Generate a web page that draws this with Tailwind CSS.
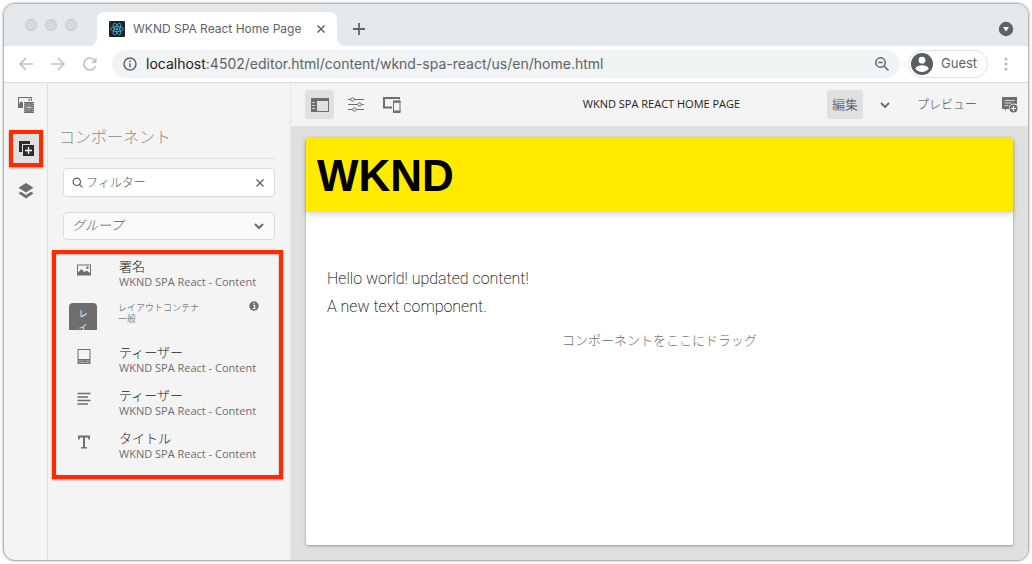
<!DOCTYPE html>
<html lang="ja">
<head>
<meta charset="utf-8">
<title>WKND SPA React Home Page</title>
<script src="https://cdn.jsdelivr.net/npm/@tailwindcss/browser@4"></script>
</head>
<body class="h-screen bg-white p-[3px] font-['Open_Sans','Noto_Sans_CJK_JP',sans-serif] text-xs text-[#6e6e6e]">
<div class="flex h-full flex-col overflow-hidden rounded-xl border border-[#b4b4b4] bg-[#f4f4f4] shadow-[0_0_3px_rgba(0,0,0,0.3)]">

  <!-- Tab strip -->
  <header class="flex h-[42px] shrink-0 items-end bg-[#e5e9ec] pr-[14px] pl-[21px] font-[Inter,sans-serif]">
    <div class="flex h-full items-center gap-2 pr-5">
      <span class="size-3 rounded-full border border-[#c6c8ca] bg-[#d6d8da]"></span>
      <span class="size-3 rounded-full border border-[#c6c8ca] bg-[#d6d8da]"></span>
      <span class="size-3 rounded-full border border-[#c6c8ca] bg-[#d6d8da]"></span>
    </div>
    <div class="relative flex h-[34px] w-60 items-center rounded-t-lg bg-white pr-2 pl-3">
      <svg class="absolute bottom-0 -left-2 size-2" viewBox="0 0 8 8" fill="#fff"><path d="M8 0v8H0A8 8 0 0 0 8 0z"/></svg>
      <svg class="absolute -right-2 bottom-0 size-2" viewBox="0 0 8 8" fill="#fff"><path d="M0 0v8h8A8 8 0 0 1 0 0z"/></svg>
      <svg class="size-4 shrink-0" viewBox="0 0 16 16" fill="none" stroke="#3fb4cf" stroke-width="0.8"><rect width="16" height="16" rx="1" fill="#20232a" stroke="none"/><ellipse cx="8" cy="8" rx="6.4" ry="2.5"/><ellipse cx="8" cy="8" rx="6.4" ry="2.5" transform="rotate(60 8 8)"/><ellipse cx="8" cy="8" rx="6.4" ry="2.5" transform="rotate(120 8 8)"/><circle cx="8" cy="8" r="1.2" fill="#3fb4cf" stroke="none"/></svg>
      <span class="ml-2 grow whitespace-nowrap text-xs text-[#5f6368]">WKND SPA React Home Page</span>
      <button class="grid size-4 place-items-center" aria-label="Close tab"><svg class="size-2" viewBox="0 0 8 8" stroke="#5f6368" stroke-width="1.5"><path d="M.5.5l7 7M7.5.5l-7 7"/></svg></button>
    </div>
    <button class="mb-[9px] ml-[14px] grid size-4 place-items-center" aria-label="New tab"><svg class="size-3" viewBox="0 0 12 12" stroke="#5f6368" stroke-width="1.8"><path d="M6 0v12M0 6h12"/></svg></button>
    <button class="mb-[9px] ml-auto" aria-label="Search tabs"><svg class="size-4" viewBox="0 0 16 16"><circle cx="8" cy="8" r="7.2" fill="#5f6368"/><path d="M5 6h6l-3 4.5z" fill="#fff"/></svg></button>
  </header>

  <!-- Address bar -->
  <nav class="flex h-[37px] shrink-0 items-center border-b border-[#dcdcdc] bg-white pr-[14px] pl-[14px] font-[Inter,sans-serif]">
    <div class="flex w-[94px] shrink-0 gap-4">
      <button aria-label="Back"><svg class="size-4" viewBox="0 0 16 16" fill="none" stroke="#c0c3c6" stroke-width="1.6"><path d="M15 8H2M8 2L2 8l6 6"/></svg></button>
      <button aria-label="Forward"><svg class="size-4" viewBox="0 0 16 16" fill="none" stroke="#c0c3c6" stroke-width="1.6"><path d="M1 8h13M8 2l6 6-6 6"/></svg></button>
      <button aria-label="Reload"><svg class="size-4" viewBox="0 0 16 16" fill="none" stroke="#c0c3c6" stroke-width="1.7"><path d="M13.6 10A6 6 0 1 1 12.6 4.200L14 6"/><path d="M14.500 1.500v5.500h-5.500z" fill="#c0c3c6" stroke="none"/></svg></button>
    </div>
    <div class="flex h-7 grow items-center rounded-full bg-[#f1f3f4] pr-[10px] pl-[10px]">
      <svg class="size-4 shrink-0" viewBox="0 0 16 16" fill="none" stroke="#5f6368" stroke-width="1.5"><circle cx="8" cy="8" r="6"/><path d="M8 7.200v4M8 4.600v1.500"/></svg>
      <div role="textbox" aria-label="Address" contenteditable="true" class="ml-2 grow text-sm whitespace-nowrap text-[#5f6368]"><span class="text-[#202124]">localhost</span>:4502/editor.html/content/wknd-spa-react/us/en/home.html</div>
      <button aria-label="Zoom"><svg class="size-4" viewBox="0 0 16 16" fill="none" stroke="#5f6368" stroke-width="1.5"><circle cx="6.500" cy="6.500" r="4.700"/><path d="M10 10l4.500 4.500M4.300 6.500h4.400"/></svg></button>
    </div>
    <button class="ml-2 flex h-7 w-20 items-center rounded-full border border-[#dfe1e4] pl-[2px] text-[13px] text-[#5f6368]"><svg class="mr-2 size-[22px]" viewBox="0 0 22 22"><circle cx="11" cy="11" r="11" fill="#5a5e64"/><circle cx="11" cy="7.200" r="3.400" fill="#fff"/><path d="M4.200 15.500c1-2.400 4.300-3.300 6.800-3.300s5.800.9 6.800 3.300c-1.500 2.200-4 3.500-6.800 3.500s-5.300-1.300-6.800-3.500z" fill="#fff"/></svg>Guest</button>
    <button class="ml-[10px]" aria-label="Menu"><svg class="size-4" viewBox="0 0 16 16" fill="#b6b9bc"><circle cx="8" cy="3" r="1.500"/><circle cx="8" cy="8" r="1.500"/><circle cx="8" cy="13" r="1.500"/></svg></button>
  </nav>

  <div class="flex min-h-0 grow">
    <!-- Rail -->
    <nav class="flex w-11 shrink-0 flex-col items-center border-r border-[#e0e0e0] pt-[14px]">
      <button aria-label="Assets"><svg class="size-4" viewBox="0 0 16 16" fill="#6e6e6e"><path d="M0 0h14v4h-1V1H1v6l2-3 2 2v5H0z"/><circle cx="11.300" cy="2.800" r="1"/><path d="M6 5h10v11H6z"/><path d="M8.500 6.500h5v3.300h-5zM8.500 11h5v3.500h-5z" fill="#8a8a8a"/><path d="M8.500 10.400h5" stroke="#eee" stroke-width=".8"/><path d="M6.500 6h1v1h-1zM6.500 8h1v1h-1zM6.500 10h1v1h-1zM6.500 12h1v1h-1zM6.500 14h1v1h-1zM14.500 6h1v1h-1zM14.500 8h1v1h-1zM14.500 10h1v1h-1zM14.500 12h1v1h-1zM14.500 14h1v1h-1z" fill="#ddd"/></svg></button>
      <button class="mt-[17px] grid h-[37px] w-[34px] place-items-center border-4 border-[#ff2a00] bg-[#e0e0e0] shadow-[0_1px_2px_rgba(0,0,0,0.4)]" aria-label="Components"><svg class="size-4" viewBox="0 0 16 16" fill="#2c2c2c"><path d="M1 0h11v3H4v8H1z"/><path d="M5 4h11v11H5z"/><path d="M10.500 6v7M7 9.500h7" stroke="#fff" stroke-width="1.400"/></svg></button>
      <button class="mt-4" aria-label="Content tree"><svg class="size-4" viewBox="0 0 16 16" fill="#6e6e6e"><path d="M8 0l7.500 4.800L8 9.600.5 4.800z"/><path d="M3 8.700l5 3.200 5-3.200 2.500 1.600L8 15.500.5 10.300z"/></svg></button>
    </nav>

    <!-- Component browser -->
    <aside class="w-[243px] shrink-0 border-r border-[#e6e6e6] pt-[42px] pr-[7px] pl-1">
      <div class="pr-2 pl-[11px]">
        <h2 class="-ml-1 border-b border-[#f4f4f4] text-base leading-6 font-light text-[#8e8e8e]">コンポーネント</h2>
        <div class="mt-2 h-px bg-[#e0e0e0]"></div>
        <div class="mt-[9px] flex h-[29px] items-center rounded border border-[#dadada] bg-white px-2">
          <svg class="size-[11px] shrink-0" viewBox="0 0 11 11" fill="none" stroke="#5c5c5c" stroke-width="1.200"><circle cx="4.800" cy="4.800" r="3.700"/><path d="M7.400 7.400l3 3"/></svg>
          <input aria-label="フィルター" placeholder="フィルター" class="ml-[3px] min-w-0 grow bg-transparent text-xs font-light outline-none placeholder:text-[#5a5a5a]">
          <button class="grid size-3 place-items-center" aria-label="Clear"><svg class="size-2" viewBox="0 0 8 8" stroke="#5c5c5c" stroke-width="1.200"><path d="M.5.5l7 7M7.500.5l-7 7"/></svg></button>
        </div>
        <div class="mt-[15px] grid h-7 items-center rounded border border-[#dadada] bg-[#fafafa]">
          <select aria-label="グループ" class="col-start-1 row-start-1 h-full w-full appearance-none bg-transparent pl-2 text-[13px] font-light text-[#5a5a5a] italic"><option>グループ</option></select>
          <svg class="pointer-events-none col-start-1 row-start-1 mr-[10px] h-2 w-[10px] justify-self-end" viewBox="0 0 10 8" fill="none" stroke="#6a6a6a" stroke-width="2"><path d="M1 2l4 4 4-4"/></svg>
        </div>
        <div class="mt-2 h-px bg-[#e6e6e6]"></div>
      </div>
      <ul class="mt-px flex h-[229px] flex-col border-4 border-[#ff2a00] pt-1 pr-5 pl-[13px] shadow-[0_1px_2px_rgba(0,0,0,0.4),inset_0_1px_2px_rgba(0,0,0,0.3)]">
        <li class="flex h-[43px] shrink-0"><svg class="mt-1 mr-[27px] ml-[7px] size-4 shrink-0" viewBox="0 0 16 16" fill="#6e6e6e"><path d="M1 2.500h14v11H1zM2 3.500v7l3.500-3.500 3 3.200 2-1.700 3.500 2.500v-7.500z" fill-rule="evenodd"/><circle cx="11.500" cy="5.700" r="1.200"/></svg><div><div class="text-[13px] leading-4 font-light text-[#222]">署名</div><div class="text-[11px] leading-[15px] whitespace-nowrap">WKND SPA React - Content</div></div></li>
        <li class="flex h-[43px] shrink-0"><div class="mt-[2px] mr-[21px] h-[27px] w-7 shrink-0 overflow-hidden rounded-t-sm bg-[#6e6e6e] pt-1 text-center text-[9px] leading-[14px] text-[#f4f4f4]">レ<br>イ</div><div class="mt-px grow text-[9px] leading-[11px] font-light text-[#4b4b4b]"><div>レイアウトコンテナ</div><div>一般</div></div><svg class="size-[10px] shrink-0" viewBox="0 0 10 10"><circle cx="5" cy="5" r="4.700" fill="#6e6e6e"/><path d="M4 4.300h1.600v3M3.800 7.500h2.600M5 1.700v1.400" stroke="#fff" stroke-width="1.100" fill="none"/></svg></li>
        <li class="flex h-[43px] shrink-0"><svg class="mt-1 mr-[27px] ml-[7px] size-4 shrink-0" viewBox="0 0 16 16" fill="#6e6e6e"><path d="M1.500 1h13v15h-13zM2.500 2v9h11V2z" fill-rule="evenodd"/><path d="M2.500 12.800h5.500M9.500 12.800h4M2.500 14.500h11" stroke="#d8d8d8" stroke-width=".6"/></svg><div><div class="text-[13px] leading-4 font-light text-[#222]">ティーザー</div><div class="text-[11px] leading-[15px] whitespace-nowrap">WKND SPA React - Content</div></div></li>
        <li class="flex h-[43px] shrink-0"><svg class="mt-1 mr-[27px] ml-[7px] size-4 shrink-0" viewBox="0 0 16 16" stroke="#6e6e6e" stroke-width="1.300"><path d="M1.500 2.500h13M1.500 6h10.500M1.500 9.500h13M1.500 13h10.500"/></svg><div><div class="text-[13px] leading-4 font-light text-[#222]">ティーザー</div><div class="text-[11px] leading-[15px] whitespace-nowrap">WKND SPA React - Content</div></div></li>
        <li class="flex h-[43px] shrink-0"><svg class="mt-1 mr-[27px] ml-[7px] size-4 shrink-0" viewBox="0 0 16 16" fill="#6e6e6e"><path d="M2 1.500h12v4h-1.500l-.5-2H9v9.500l2 .3V14.500H5v-1.200l2-.3V3.500H4l-.5 2H2z"/></svg><div><div class="text-[13px] leading-4 font-light text-[#222]">タイトル</div><div class="text-[11px] leading-[15px] whitespace-nowrap">WKND SPA React - Content</div></div></li>
      </ul>
    </aside>

    <main class="flex min-w-0 grow flex-col bg-[#e0e0e0]">
      <!-- Editor toolbar -->
      <div class="grid h-[43px] shrink-0 grid-cols-[1fr_auto_1fr] items-center bg-[#f4f4f4] pr-[10px] pl-[14px]">
        <div class="flex items-center">
          <button class="grid size-[29px] place-items-center rounded-[3px] bg-[#e0e0e0]" aria-label="Toggle side panel"><svg class="h-[14px] w-[18px]" viewBox="0 0 18 14" fill="#6e6e6e"><path d="M0 0h18v14H0zM6 3V13h11V3z" fill-rule="evenodd"/><path d="M1 4.500h3M1 7.500h3M1 10.500h3" stroke="#ccc"/></svg></button>
          <button class="ml-[14px]" aria-label="Page information"><svg class="size-4" viewBox="0 0 16 16" fill="none" stroke="#6e6e6e"><path d="M0 2.500h3M6 2.500H16M0 7.500h9.500M13.500 7.500H16M0 12.500h4.500M8.500 12.500H16"/><circle cx="4.500" cy="2.500" r="1.700"/><circle cx="11.500" cy="7.500" r="1.700"/><circle cx="6.500" cy="12.500" r="1.700"/></svg></button>
          <button class="ml-[19px]" aria-label="Emulator"><svg class="h-4 w-[18px]" viewBox="0 0 18 16" fill="none" stroke="#6e6e6e"><path d="M0 1h17M1 1v10M0 10.500h9" stroke-width="2"/><path d="M16.500 1v1.500"/><path d="M10.500 4h6.500v11.500h-6.500z" fill="#f4f4f4"/><path d="M10 4.700h7.500M10 14.500h7.500" stroke-width="2"/></svg></button>
        </div>
        <h1 class="text-[11px] whitespace-nowrap text-[#222]">WKND SPA REACT HOME PAGE</h1>
        <div class="flex items-center justify-end">
          <button class="h-[29px] w-9 rounded-[3px] bg-[#e0e0e0] text-[13px] font-light text-[#4b4b4b]">編集</button>
          <button class="ml-4 grid size-3 place-items-center" aria-label="Choose mode"><svg class="h-2 w-[10px]" viewBox="0 0 10 8" fill="none" stroke="#6a6a6a" stroke-width="1.800"><path d="M1 2l4 4 4-4"/></svg></button>
          <button class="ml-[26px] text-xs font-light text-[#4b4b4b]">プレビュー</button>
          <button class="ml-[25px]" aria-label="Annotate"><svg class="size-4" viewBox="0 0 16 16" fill="#6e6e6e"><path d="M0 0h15v7.500A5 5 0 0 0 7 12H4.500L3 14v-2H0z"/><path d="M2.500 3.500h10M2.500 6h7M2.500 8.500h4" stroke="#d5d5d5"/><circle cx="11.500" cy="11.500" r="4"/><path d="M11.500 9v5M9 11.500h5" stroke="#fff" stroke-width="1.200"/></svg></button>
        </div>
      </div>
      <!-- Page preview -->
      <div class="mx-[15px] mt-3 mb-[15px] flex grow flex-col rounded-xs bg-white shadow-[0_1px_3px_rgba(0,0,0,0.35)]">
        <div class="flex h-[74px] shrink-0 items-center rounded-t-xs bg-[#ffea00] pt-px pl-[11px] shadow-[0_2px_6px_rgba(0,0,0,0.18)]"><span class="font-['Liberation_Sans',sans-serif] text-[44px] leading-none font-bold text-black">WKND</span></div>
        <div class="mt-[53px] px-[21px] font-[Roboto,sans-serif] text-base leading-7 font-extralight text-black">
          <p>Hello world! updated content!</p>
          <p>A new text component.</p>
        </div>
        <p class="mt-[11px] text-center text-[13px] leading-4 font-light text-[#6e6e6e]">コンポーネントをここにドラッグ</p>
      </div>
    </main>
  </div>
</div>
</body>
</html>
